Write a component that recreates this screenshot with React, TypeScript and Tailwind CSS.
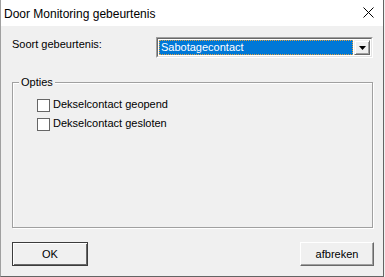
import React from "react";

const font = { fontFamily: '"Liberation Sans", Arial, sans-serif' };

const Checkbox: React.FC<{ label: string }> = ({ label }) => (
  <label className="flex items-center h-[19px]">
    <span className="w-[13px] h-[13px] border border-[#666666] bg-white mt-[1px]" />
    <span className="ml-[3px] text-[11px] text-black leading-none">{label}</span>
  </label>
);

const App: React.FC = () => {
  return (
    <div className="w-[385px] h-[277px] bg-[#f0f0f0]" style={font}>
      <div className="w-[384px] h-[277px] flex flex-col border-l border-r border-b border-l-[#a0a0a0] border-r-[#646464] border-b-[#646464] bg-[#f0f0f0]">
        {/* title bar */}
        <div className="h-[26px] bg-white flex items-center justify-between pl-[3px] pr-[9px] shrink-0">
          <span className="text-[12px] text-black pt-[1px]">Door Monitoring gebeurtenis</span>
          <svg width="11" height="11" viewBox="0 0 11 11" className="mb-[1px]">
            <path d="M0.5 0.5 L10.5 10.5 M10.5 0.5 L0.5 10.5" stroke="#000" strokeWidth="1" fill="none" />
          </svg>
        </div>

        {/* body */}
        <div className="flex flex-col pl-[11px] pr-[10px]">
          <div className="flex items-center mt-[11px] h-[21px]">
            <span className="text-[11px] text-black w-[144px] -mt-[6px]">Soort gebeurtenis:</span>
            <div className="w-[217px] h-[21px] border border-t-[#a0a0a0] border-l-[#a0a0a0] border-b-white border-r-white">
              <div className="h-full border border-t-[#696969] border-l-[#696969] border-b-[#e3e3e3] border-r-[#e3e3e3] bg-white flex p-[1px]">
                <div className="flex-1 bg-[#0078d7] outline-1 outline-dotted outline-[#e0a040] -outline-offset-1 flex items-center pl-[2px]">
                  <span className="text-[11px] text-white leading-none">Sabotagecontact</span>
                </div>
                <div className="w-[16px] ml-[1px] bg-[#f0f0f0] border border-t-[#f0f0f0] border-l-[#f0f0f0] border-b-[#696969] border-r-[#696969] shadow-[inset_1px_1px_0_#fff,inset_-1px_-1px_0_#a0a0a0] flex items-center justify-center">
                  <svg width="7" height="4" viewBox="0 0 7 4">
                    <path d="M0 0 H7 L3.5 4 Z" fill="#000" />
                  </svg>
                </div>
              </div>
            </div>
          </div>

          {/* group box */}
          <div className="relative mt-[24px] w-[361px] h-[146px] border border-[#a0a0a0] shadow-[1px_1px_0_#fff,inset_1px_1px_0_#fff]">
            <span className="absolute -top-[7px] left-[6px] px-[2px] bg-[#f0f0f0] text-[11px] text-black leading-[13px]">
              Opties
            </span>
            <div className="flex flex-col pl-[24px] pt-[12px]">
              <Checkbox label="Dekselcontact geopend" />
              <Checkbox label="Dekselcontact gesloten" />
            </div>
          </div>

          {/* buttons */}
          <div className="flex justify-between mt-[14px] w-[362px]">
            <button className="w-[76px] h-[24px] border border-[#3c3c3c] bg-[#f0f0f0] shadow-[inset_1px_1px_0_#fff,inset_-1px_-1px_0_#696969] text-[11px] text-black">
              OK
            </button>
            <button className="w-[74px] h-[24px] border border-t-white border-l-white border-b-[#696969] border-r-[#696969] bg-[#f0f0f0] shadow-[inset_-1px_-1px_0_#a0a0a0] text-[11px] text-black">
              afbreken
            </button>
          </div>
        </div>
      </div>
    </div>
  );
};

export default App;
